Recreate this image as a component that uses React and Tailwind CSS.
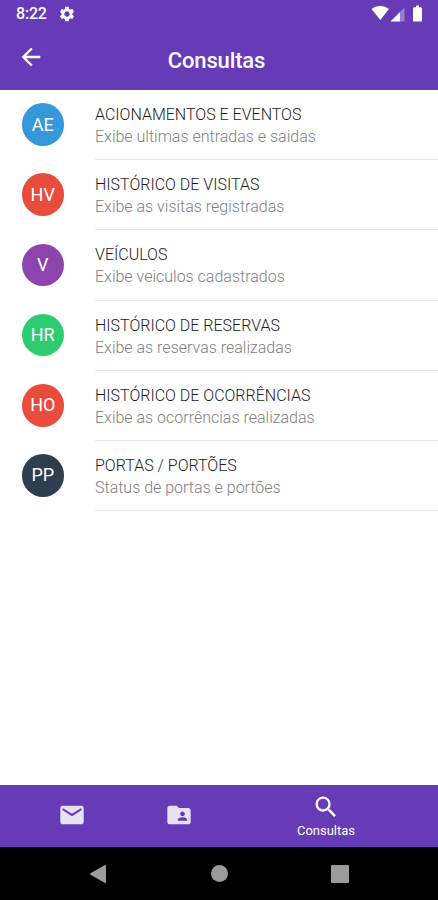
import React from "react";
import {
  MdArrowBack,
  MdEmail,
  MdFolderShared,
  MdSearch,
  MdSettings,
} from "react-icons/md";

const items = [
  {
    initials: "AE",
    title: "ACIONAMENTOS E EVENTOS",
    subtitle: "Exibe ultimas entradas e saidas",
    color: "bg-[#3498db]",
  },
  {
    initials: "HV",
    title: "HISTÓRICO DE VISITAS",
    subtitle: "Exibe as visitas registradas",
    color: "bg-[#e74c3c]",
  },
  {
    initials: "V",
    title: "VEÍCULOS",
    subtitle: "Exibe veiculos cadastrados",
    color: "bg-[#8e44ad]",
  },
  {
    initials: "HR",
    title: "HISTÓRICO DE RESERVAS",
    subtitle: "Exibe as reservas realizadas",
    color: "bg-[#2ecc71]",
  },
  {
    initials: "HO",
    title: "HISTÓRICO DE OCORRÊNCIAS",
    subtitle: "Exibe as ocorrências realizadas",
    color: "bg-[#e74c3c]",
  },
  {
    initials: "PP",
    title: "PORTAS / PORTÕES",
    subtitle: "Status de portas e portões",
    color: "bg-[#2c3e50]",
  },
];

const StatusBar = () => (
  <div className="flex h-7 items-center justify-between pl-4 pr-[14px] text-white">
    <div className="flex items-center gap-[11px]">
      <span className="text-base font-medium leading-7 tracking-[-0.2px]">
        8:22
      </span>
      <MdSettings className="size-[18px]" />
    </div>
    <svg width="53" height="20" viewBox="0 0 53 20" fill="currentColor">
      <path d="M.5 5C5.500 1 13 1 18 5L9.300 16z" />
      <path d="M19.500 17.500 29 8v9.500z" />
      <path d="M29 8 33.500 3.500v14H29z" opacity=".35" />
      <path d="M45 1.500h3v1.700h1.800q1.200 0 1.200 1.200v12q0 1.200-1.200 1.200h-6.600q-1.200 0-1.200-1.200v-12q0-1.200 1.200-1.200H45z" />
    </svg>
  </div>
);

const Header = () => (
  <header className="h-[89.5px] shrink-0 bg-[#673ab7]">
    <StatusBar />
    <div className="grid grid-cols-[1fr_auto_1fr] items-center pl-[17px] pr-[22px] pt-4 text-white">
      <button aria-label="Voltar" className="-mt-2 size-7">
        <MdArrowBack className="size-7" />
      </button>
      <h1 className="text-[22px] font-medium leading-[34px] tracking-[-0.15px]">
        Consultas
      </h1>
    </div>
  </header>
);

const ListItem = ({ initials, title, subtitle, color }) => (
  <li className="flex h-[70.2px] pl-[21.5px]">
    <div
      className={`mt-[13.3px] flex size-[42.5px] shrink-0 items-center justify-center rounded-full text-lg leading-none text-white ${color}`}
    >
      {initials}
    </div>
    <div className="ml-[31px] flex-1 border-b border-[#e9e9e9] pt-3.5">
      <p className="text-base font-light leading-[22px] text-[#1c1c1c]">
        {title}
      </p>
      <p className="text-base font-light leading-[22px] text-[#808080]">
        {subtitle}
      </p>
    </div>
  </li>
);

const TabBar = () => (
  <nav className="flex h-[62.5px] shrink-0 bg-[#673ab7] px-[18.5px] text-white">
    <button className="flex w-[107px] items-center justify-center pb-px">
      <MdEmail className="size-7 opacity-85" />
    </button>
    <button className="flex w-[107px] items-center justify-center pb-px">
      <MdFolderShared className="size-7 opacity-85" />
    </button>
    <button className="flex flex-1 flex-col items-center pt-2">
      <MdSearch className="size-7" />
      <span className="text-[13px] leading-5">Consultas</span>
    </button>
  </nav>
);

const SystemNav = () => (
  <div className="flex h-[53px] shrink-0 justify-center bg-black text-[#9b9b9b]">
    <div className="flex w-[121px] items-center justify-center">
      <svg width="18" height="20" viewBox="0 0 18 20" fill="currentColor">
        <path d="M16 1Q17 .6 17 2v16q0 1.400-1 1L1.500 10.800q-1-.8 0-1.600z" />
      </svg>
    </div>
    <div className="flex w-[121px] items-center justify-center">
      <div className="size-[17px] rounded-full bg-current" />
    </div>
    <div className="flex w-[121px] items-center justify-center">
      <div className="size-[18px] rounded-[1px] bg-current" />
    </div>
  </div>
);

const App = () => {
  return (
    <div className="flex h-[900px] w-[438px] flex-col overflow-hidden bg-white font-['Roboto',sans-serif]">
      <Header />
      <ul className="flex-1 pt-[0.5px]">
        {items.map((item) => (
          <ListItem key={item.title} {...item} />
        ))}
      </ul>
      <TabBar />
      <SystemNav />
    </div>
  );
};

export default App;
